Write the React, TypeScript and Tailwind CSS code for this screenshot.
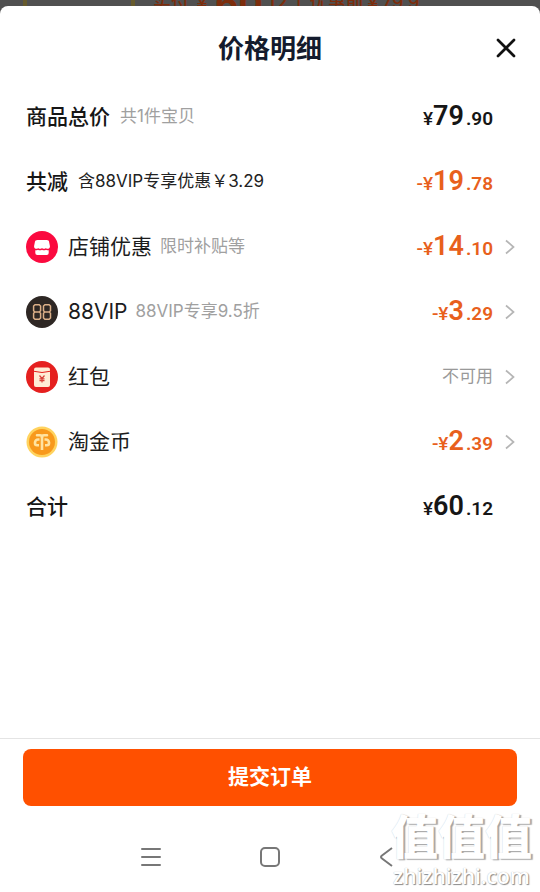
import { useState } from 'react'
import type { ReactNode } from 'react'

// --- Types ---
type Tone = 'dark' | 'orange'

type Discount = {
  id: string
  icon: ReactNode
  label: string
  note?: string
  amount?: string
}

// --- Icons ---
const ShopIcon = () => (
  <svg viewBox="0 0 32 32" className="size-8 shrink-0" aria-hidden="true">
    <circle cx="16" cy="16" r="16" fill="#fb0a3f" />
    <path d="M11.500 9h9.300c1.400 0 2.100.7 2.300 1.900l.8 4.100c.2 1.400-.4 2.600-1.800 2.800-1.100.1-1.700-.3-2.200-.9-.9 1.200-2.900 1.200-3.900 0-1 1.200-3 1.200-3.900 0-.5.6-1.100 1-2.200.9-1.400-.2-2-1.400-1.800-2.800l.8-4.100c.3-1.200 1-1.900 2.600-1.900z" fill="#fff" />
    <path d="M9.300 19.300c1 .1 1.900-.1 2.700-.6 1.200.7 2.800.7 4 0 1.200.7 2.800.7 4 0 .8.500 1.700.7 2.700.6v2.700a2 2 0 0 1-2 2h-9.400a2 2 0 0 1-2-2z" fill="#fff" />
  </svg>
)

const VipIcon = () => (
  <svg viewBox="0 0 32 32" className="size-8 shrink-0" aria-hidden="true">
    <circle cx="16" cy="16" r="16" fill="#2e2724" />
    <g fill="none" stroke="#dcb088" strokeWidth="1.500">
      <path d="M9 8.700h4.200l1.400 1.300v4.800L13.400 16l1.200 1.200V22l-1.400 1.300H9L7.600 22v-4.800L8.800 16l-1.200-1.200V10zM8.800 16h4.600" />
      <path d="M18.900 8.700h4.200l1.400 1.300v4.800L23.300 16l1.200 1.200V22l-1.400 1.300h-4.200L17.500 22v-4.800l1.200-1.200-1.200-1.200V10zM18.700 16h4.600" />
    </g>
  </svg>
)

const RedPacketIcon = () => (
  <svg viewBox="0 0 32 32" className="size-8 shrink-0" aria-hidden="true">
    <circle cx="16" cy="16" r="16" fill="#e5201f" />
    <rect x="8" y="6.500" width="16" height="19.500" rx="2" fill="#ffecd6" />
    <path d="M8 10.300q8 2.400 16 0" fill="none" stroke="#e5201f" strokeWidth="1" />
    <path d="m13.500 14.500 2.500 3 2.500-3M16 17.500v4M13.500 17.800h5M13.500 19.600h5" fill="none" stroke="#d8413a" strokeWidth="1.200" />
  </svg>
)

const CoinIcon = () => (
  <svg viewBox="0 0 32 32" className="size-8 shrink-0" aria-hidden="true">
    <circle cx="16" cy="16" r="15.500" fill="#ffd35f" />
    <circle cx="16" cy="16" r="13" fill="#f8991c" />
    <g fill="none" stroke="#ffe3a0" strokeWidth="2.600" strokeLinejoin="round">
      <path d="M11 9.300h3q2 0 2 2 0-2 2-2h3" strokeLinecap="round" />
      <path d="M13.500 13.500H12a3 3 0 0 0-3 3v.8a2 2 0 0 0 2 2h2" />
      <path d="M18.500 13.500H20a3 3 0 0 1 3 3v.8a2 2 0 0 1-2 2h-2" />
      <path d="M16 11v13" />
    </g>
  </svg>
)

const Chevron = () => (
  <svg viewBox="0 0 10 16" className="h-4 w-[10px]" fill="none" stroke="#b5b5b5" strokeWidth="1.700" aria-hidden="true">
    <path d="m1 1.500 7.500 6.500L1 14.500" />
  </svg>
)

// --- Data ---
const discounts: Discount[] = [
  { id: 'shop', icon: <ShopIcon />, label: '店铺优惠', note: '限时补贴等', amount: '14.10' },
  { id: 'vip', icon: <VipIcon />, label: '88VIP', note: '88VIP专享9.5折', amount: '3.29' },
  { id: 'packet', icon: <RedPacketIcon />, label: '红包' },
  { id: 'coin', icon: <CoinIcon />, label: '淘金币', amount: '2.39' },
]

const Price = ({ amount, tone, minus = false }: { amount: string; tone: Tone; minus?: boolean }) => {
  const [whole, cents] = amount.split('.')
  return (
    <span
      className={`flex items-baseline pt-0.5 font-["Roboto","Noto_Sans_CJK_SC",sans-serif] text-[19px] leading-8 ${tone === 'orange' ? 'text-[#e8601c]' : 'text-[#161616]'}`}
    >
      <span className="font-medium">{minus && '-'}¥</span>
      <span className="text-[27px] font-semibold">{whole}</span>
      <span className="pl-0.5 font-semibold">.{cents}</span>
    </span>
  )
}

const SummaryRow = ({ label, note, noteClass = '', children }: { label: string; note?: string; noteClass?: string; children: ReactNode }) => (
  <div className="flex h-[65px] items-center justify-between pr-[47px] pl-[26px]">
    <p className="flex items-center gap-2.5">
      <span className="text-[21px] font-medium text-[#161616]">{label}</span>
      {note && <span className={`text-[17px] ${noteClass}`}>{note}</span>}
    </p>
    {children}
  </div>
)

const DiscountRow = ({ item, onOpen }: { item: Discount; onOpen: () => void }) => (
  <button type="button" onClick={onOpen} className="flex h-[65px] w-full items-center justify-between pr-[25px] pl-[26px] text-left">
    <span className="flex items-center gap-2">
      {item.icon}
      <span className="pl-0.5 text-[21px] text-[#1c1c1c]">{item.label}</span>
      {item.note && <span className="text-[17px] text-[#a0a0a0]">{item.note}</span>}
    </span>
    <span className="flex items-center gap-3">
      {item.amount ? <Price amount={item.amount} tone="orange" minus /> : <span className="text-[17px] text-[#999999]">不可用</span>}
      <Chevron />
    </span>
  </button>
)

export default function App() {
  const [, setOpened] = useState<string | null>(null)

  return (
    <div className='flex min-h-screen flex-col bg-[#505050] font-["Inter","Noto_Sans_CJK_SC",sans-serif]'>
      {/* order page peeking out above the sheet */}
      <div className="flex h-1.5 items-center gap-[18px] overflow-hidden pl-[23px] text-[#7d2d0c]" aria-hidden="true">
        <div className="h-1.5 w-28 shrink-0 border-x-4 border-[#665a2c]" />
        <div className="flex items-center text-lg leading-none font-medium whitespace-nowrap">
          <span>实付</span>
          <span className="pl-1">￥</span>
          <span className="pl-1 text-4xl leading-none font-bold">60</span>
          <span className="text-xl leading-none">.12</span>
          <span className="px-2">|</span>
          <span>优惠前￥79.9</span>
        </div>
      </div>

      <div className="flex flex-1 flex-col rounded-t-lg bg-white">
        <header className="grid h-[78px] grid-cols-[1fr_auto_1fr] items-center px-6 pt-1.5">
          <h1 className="col-start-2 text-[26px] font-bold text-[#141b2d]">价格明细</h1>
          <button type="button" aria-label="关闭" className="justify-self-end">
            <svg viewBox="0 0 20 20" className="size-5" fill="none" stroke="#111" strokeWidth="2.700" strokeLinecap="round">
              <path d="m2 2 16 16M18 2 2 18" />
            </svg>
          </button>
        </header>

        <main className="flex-1">
          <SummaryRow label="商品总价" note="共1件宝贝" noteClass="text-[#a0a0a0]">
            <Price amount="79.90" tone="dark" />
          </SummaryRow>
          <SummaryRow label="共减" note="含88VIP专享优惠￥3.29" noteClass="text-[#222222]">
            <Price amount="19.78" tone="orange" minus />
          </SummaryRow>
          {discounts.map(item => (
            <DiscountRow key={item.id} item={item} onOpen={() => setOpened(item.id)} />
          ))}
          <SummaryRow label="合计">
            <Price amount="60.12" tone="dark" />
          </SummaryRow>
        </main>

        <footer className="border-t border-[#e4e4e4] px-[23px] pt-2.5">
          <button type="button" className="h-[57px] w-full rounded-lg bg-[#ff5000] pb-0.5 text-[21px] font-bold text-white">
            提交订单
          </button>
        </footer>

        <nav className="relative flex h-[86px] items-center justify-between pt-4 pr-[142px] pl-[141px]">
          <button type="button" aria-label="最近任务">
            <svg viewBox="0 0 20 20" className="size-5" fill="none" stroke="#777" strokeWidth="2">
              <path d="M1 2h18M1 10h18M1 18h18" strokeLinecap="round" />
            </svg>
          </button>
          <button type="button" aria-label="主屏幕">
            <svg viewBox="0 0 20 20" className="size-5" fill="none" stroke="#777" strokeWidth="2">
              <rect x="1" y="1" width="18" height="18" rx="4" />
            </svg>
          </button>
          <button type="button" aria-label="返回">
            <svg viewBox="0 0 20 20" className="size-5" fill="none" stroke="#777" strokeWidth="2">
              <path d="M14 1 4 8.500q-2 1.500 0 3L14 19" />
            </svg>
          </button>
          {/* watermark */}
          <div className="pointer-events-none absolute right-2 bottom-1 flex flex-col items-center text-white">
            <span className="text-[47px] leading-[54px] font-black [text-shadow:2px_1px_1px_#a4a4a4,0_0_1px_#c8c8c8]">值值值</span>
            <span className='font-["Open_Sans",sans-serif] text-[21px] leading-6 font-semibold [text-shadow:1px_1px_1px_#8a8a8a,0_0_1px_#b0b0b0]'>zhizhizhi.com</span>
          </div>
        </nav>
      </div>
    </div>
  )
}
